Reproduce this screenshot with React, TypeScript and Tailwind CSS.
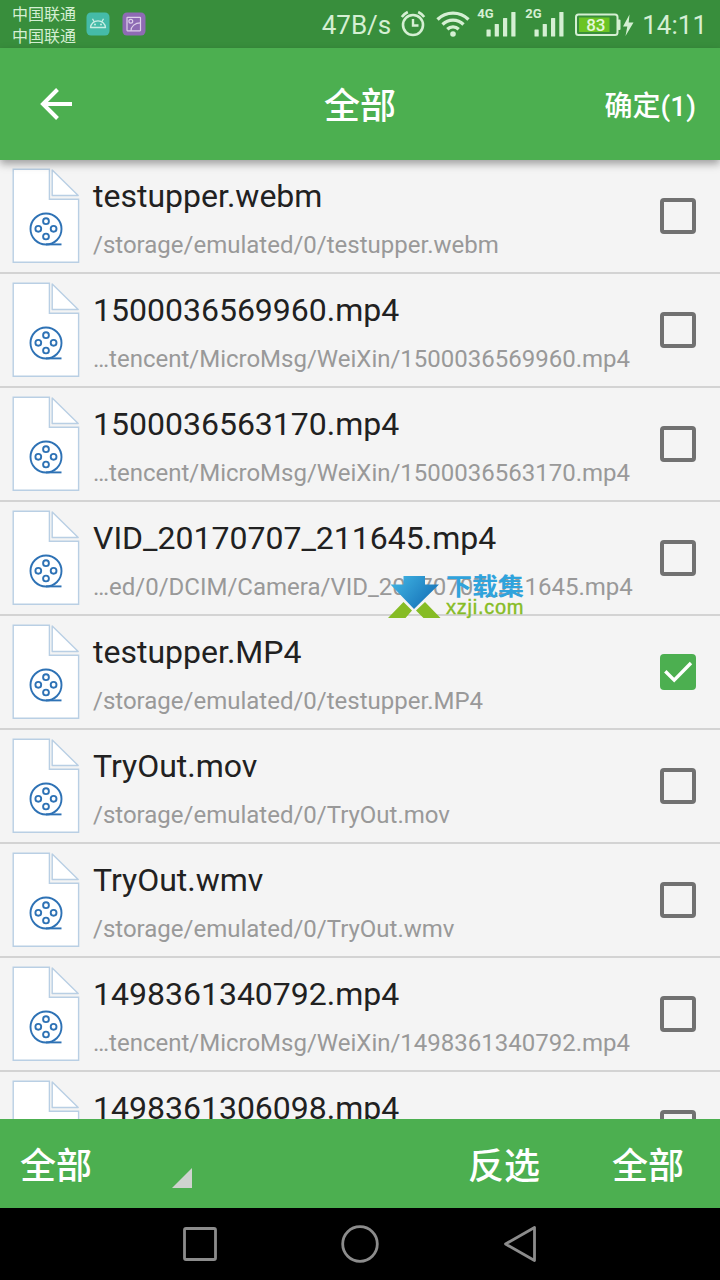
import clsx from "clsx";

type VideoFile = {
  name: string;
  path: string;
  checked?: boolean;
};

const files: VideoFile[] = [
  { name: "testupper.webm", path: "/storage/emulated/0/testupper.webm" },
  {
    name: "1500036569960.mp4",
    path: "…tencent/MicroMsg/WeiXin/1500036569960.mp4",
  },
  {
    name: "1500036563170.mp4",
    path: "…tencent/MicroMsg/WeiXin/1500036563170.mp4",
  },
  {
    name: "VID_20170707_211645.mp4",
    path: "…ed/0/DCIM/Camera/VID_20170707_211645.mp4",
  },
  {
    name: "testupper.MP4",
    path: "/storage/emulated/0/testupper.MP4",
    checked: true,
  },
  { name: "TryOut.mov", path: "/storage/emulated/0/TryOut.mov" },
  { name: "TryOut.wmv", path: "/storage/emulated/0/TryOut.wmv" },
  {
    name: "1498361340792.mp4",
    path: "…tencent/MicroMsg/WeiXin/1498361340792.mp4",
  },
  {
    name: "1498361306098.mp4",
    path: "…tencent/MicroMsg/WeiXin/1498361306098.mp4",
  },
];

const Signal = ({ label, className }: { label: string; className?: string }) => (
  <div className={clsx("relative h-[48px] w-[39px]", className)}>
    <span className="absolute left-0 top-[7px] text-[13px] leading-[13px] font-bold">
      {label}
    </span>
    <svg className="absolute inset-0" width="39" height="48" fill="currentColor">
      <rect x="9.500" y="29.500" width="4.200" height="7" rx="0.500" />
      <rect x="17.700" y="24" width="4.200" height="12.500" rx="0.500" />
      <rect x="26" y="18" width="4.200" height="18.500" rx="0.500" />
      <rect x="34.300" y="12" width="4.200" height="24.500" rx="0.500" />
    </svg>
  </div>
);

const StatusBar = () => (
  <div className="flex h-[48px] shrink-0 items-center bg-[#388e3c] pl-3 pr-[13px] text-[#d5efd3]">
    <div className="mt-[3px] w-[66px] text-[16px] leading-[22px]">
      <p>中国联通</p>
      <p>中国联通</p>
    </div>

    {/* Notification icons */}
    <svg className="ml-2" width="24" height="24" viewBox="0 0 24 24" fill="none">
      <rect x="0.5" y="0.5" width="23" height="23" rx="4.5" fill="#45bba8" />
      <path
        d="M4.500 15.500C4.800 11.500 8 8.800 12 8.800s7.200 2.700 7.500 6.700zM8 9.500L6.500 6.800M16 9.500l1.500-2.700"
        stroke="#c9eee4"
        strokeWidth="1.300"
        strokeLinejoin="round"
      />
      <circle cx="9" cy="12.500" r="1" fill="#c9eee4" />
      <circle cx="15" cy="12.500" r="1" fill="#c9eee4" />
    </svg>
    <svg className="ml-3" width="24" height="24" viewBox="0 0 24 24" fill="none">
      <rect x="0.5" y="0.5" width="23" height="23" rx="4.5" fill="#8e6bb4" />
      <g stroke="#ddd0ea" strokeWidth="1.200">
        <rect x="5" y="5.300" width="13.500" height="13.500" rx="0.500" />
        <circle cx="8.800" cy="9.200" r="1.900" />
        <path d="M9 18.800c0-4.500 4-8 9.500-8" />
      </g>
    </svg>

    <span className="ml-auto pt-[2px] text-[26px] leading-[48px]">47B/s</span>
    <svg className="ml-[9px]" width="26" height="48" fill="none" stroke="currentColor">
      <circle cx="13" cy="25" r="10" strokeWidth="2.600" />
      <path d="M13 19v6.500h5.500" strokeWidth="2.400" />
      <path d="M1.800 17a16 16 0 0 1 6-5M24.200 17a16 16 0 0 0-6-5" strokeWidth="2.600" />
    </svg>
    <svg className="ml-[10px]" width="34" height="48" fill="none" stroke="currentColor" strokeWidth="3.300">
      <path d="M1.500 19.500a22 22 0 0 1 31 0M6.500 24.500a15 15 0 0 1 21 0M11.300 29.200a8.200 8.200 0 0 1 11.400 0" />
      <circle cx="17" cy="34" r="2.800" fill="currentColor" stroke="none" />
    </svg>
    <Signal label="4G" className="ml-[7px]" />
    <Signal label="2G" className="ml-[9px]" />

    {/* Battery */}
    <svg className="ml-[11px]" width="60" height="48" fill="none">
      <rect x="1" y="14.500" width="41.500" height="20.500" rx="2.500" stroke="currentColor" strokeWidth="2" />
      <rect x="4" y="17.500" width="30.500" height="14.500" fill="#6cc424" />
      <rect x="42.500" y="19.500" width="3" height="10.500" rx="1" fill="currentColor" />
      <text x="20.800" y="31" textAnchor="middle" fontSize="17" fontWeight="500" fill="#e4f6dc">
        83
      </text>
      <path d="M54.500 14.500L48 26.500h4.300L50.500 36 58.500 22.500h-4.800z" fill="currentColor" />
    </svg>
    <span className="ml-[7px] pt-[2px] text-[26px] leading-[48px]">14:11</span>
  </div>
);

const FileIcon = () => (
  <svg width="68" height="96" viewBox="0 0 68 96" fill="none" className="shrink-0">
    <g fill="#fff" stroke="#b9cfe4" strokeWidth="1.400">
      <path d="M1.200 1.200h36.200v30h29.200v63H1.200z" />
      <path d="M40.200 2v25.500h26z" strokeLinejoin="round" />
    </g>
    <g stroke="#2e72b5" strokeWidth="1.900">
      <circle cx="34" cy="61" r="15.500" />
      <circle cx="34" cy="53.200" r="2.900" />
      <circle cx="34" cy="68.500" r="2.900" />
      <circle cx="26.300" cy="60.800" r="2.900" />
      <circle cx="41.600" cy="60.800" r="2.900" />
      <path d="M34 76.400h15.500" />
    </g>
  </svg>
);

const Checkbox = ({ checked }: { checked?: boolean }) => (
  <div
    className={clsx(
      "flex size-9 shrink-0 items-center justify-center rounded-[4px]",
      checked ? "bg-[#4caf50]" : "border-4 border-[#717171]"
    )}
  >
    {checked && (
      <svg width="36" height="36" fill="none" stroke="#fff" strokeWidth="3.400">
        <path d="M5.300 17.200l8.900 8.900L31 9" />
      </svg>
    )}
  </div>
);

const FileRow = ({ file }: { file: VideoFile }) => (
  <div className="flex h-[114px] shrink-0 items-start border-b-2 border-[#d3d3d3] pl-3 pr-6">
    <div className="mt-[8px]">
      <FileIcon />
    </div>
    <div className="ml-[13px] w-0 flex-1 whitespace-nowrap">
      <p className="mt-[16px] text-[32px] leading-[40px] text-[#212121]">{file.name}</p>
      <p className="mt-[13px] text-[24px] leading-[32px] text-[#999]">{file.path}</p>
    </div>
    <div className="mt-[38px]">
      <Checkbox checked={file.checked} />
    </div>
  </div>
);

const Watermark = () => (
  <div className="absolute left-[388px] top-[575px] flex">
    <svg width="54" height="44" viewBox="0 0 54 44">
      <defs>
        <linearGradient id="arrow" x1="0" y1="0" x2="1" y2="0.600">
          <stop offset="0" stopColor="#43b9e6" />
          <stop offset="1" stopColor="#1672b8" />
        </linearGradient>
      </defs>
      <path d="M15.500 1H37v8.500h14L26 34 2.500 9.500h13z" fill="url(#arrow)" />
      <path d="M0 43l15.500-16L24 35.500 17.500 43zM52.500 43L37 27l-9 8.500 7.500 7.500z" fill="#86bc25" />
    </svg>
    <div className="ml-[4px] whitespace-nowrap">
      <p className="h-[22px] text-[26px] leading-[25px] font-bold text-[#2fa3dc] [transform:scaleY(0.9)]">
        下载集
      </p>
      <p className="text-[20px] leading-[20px] font-['Liberation_Sans'] tracking-[0.75px] text-[#86bc25] [-webkit-text-stroke:0.4px_#86bc25]">
        xzji.com
      </p>
    </div>
  </div>
);

const App = () => {
  return (
    <div className="relative flex h-[1280px] w-[720px] flex-col overflow-hidden bg-[#f4f4f4] font-[Roboto,'Noto_Sans_CJK_SC',sans-serif]">
      <StatusBar />

      {/* Title bar */}
      <header className="z-10 grid h-[112px] shrink-0 grid-cols-3 items-center bg-[#4caf50] pl-10 pr-6 text-white shadow-[0_4px_8px_rgba(0,0,0,0.35)]">
        <svg width="32" height="32" fill="none" stroke="currentColor" strokeWidth="4">
          <path d="M32 16H3M17.500 1.500L3 16l14.500 14.500" />
        </svg>
        <h1 className="-ml-8 pt-[6px] pl-4 text-center text-[36px] font-medium">全部</h1>
        <span className="pt-[5px] text-right text-[28px] font-medium">确定(1)</span>
      </header>

      <main className="flex min-h-0 flex-1 flex-col overflow-hidden">
        {files.map((file) => (
          <FileRow key={file.name} file={file} />
        ))}
      </main>

      {/* Bottom actions */}
      <footer className="flex h-[89px] shrink-0 items-center bg-[#4caf50] pl-5 pr-9 text-[36px] font-medium text-white">
        <span className="pt-[6px]">全部</span>
        <svg className="ml-20 mt-[29px]" width="20" height="20">
          <path d="M0 20L20 0v20z" fill="#cfd3cf" />
        </svg>
        <span className="ml-auto pt-[6px]">反选</span>
        <span className="ml-[72px] pt-[6px]">全部</span>
      </footer>

      {/* System navigation */}
      <nav className="flex h-[72px] shrink-0 items-center justify-center gap-[120px] bg-black">
        <svg width="40" height="40" fill="none" stroke="#8c8c8c" strokeWidth="2.800">
          <rect x="4.500" y="4.500" width="31" height="31" rx="1.500" />
        </svg>
        <svg width="40" height="40" fill="none" stroke="#8c8c8c" strokeWidth="2.800">
          <circle cx="20" cy="20" r="17.300" />
        </svg>
        <svg width="40" height="40" fill="none" stroke="#8c8c8c" strokeWidth="2.800" strokeLinejoin="round">
          <path d="M34.500 3.500v33L5.500 20z" />
        </svg>
      </nav>

      <Watermark />
    </div>
  );
};

export default App;
